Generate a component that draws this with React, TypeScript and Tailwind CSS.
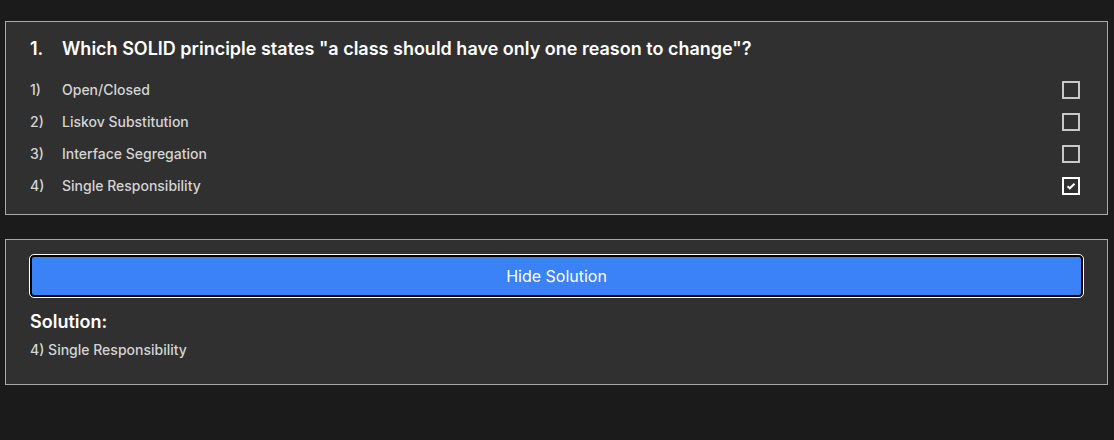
import { useState } from "react";

interface Option {
  id: number;
  label: string;
}

const options: Option[] = [
  { id: 1, label: "Open/Closed" },
  { id: 2, label: "Liskov Substitution" },
  { id: 3, label: "Interface Segregation" },
  { id: 4, label: "Single Responsibility" },
];

const Checkbox = ({ checked }: { checked: boolean }) => (
  <div
    className={`w-[18px] h-[18px] border-2 flex items-center justify-center ${
      checked ? "border-white" : "border-[#c8c8c8]"
    }`}
  >
    {checked && (
      <svg width="12" height="12" viewBox="0 0 12 12" fill="none">
        <path d="M2.5 6.2 L4.8 8.3 L9.5 3.8" stroke="white" strokeWidth="2" />
      </svg>
    )}
  </div>
);

const App = () => {
  const [selected] = useState(4);

  return (
    <div className="min-h-[440px] bg-[#1b1b1b] pt-[21px] pl-[5px] pr-[6px] font-['Inter',sans-serif]">
      <div className="bg-[#303030] border border-[#a9a9a9] pl-6 pr-[27px] pt-[15px] pb-3">
        <h2 className="flex text-lg font-semibold text-white leading-6">
          <span className="w-8">1.</span>
          <span>Which SOLID principle states "a class should have only one reason to change"?</span>
        </h2>
        <div className="mt-[13px]">
          {options.map((option) => (
            <div key={option.id} className="flex items-center h-8 text-sm font-medium text-[#d4d4d4]">
              <span className="w-8">{option.id})</span>
              <span className="flex-1">{option.label}</span>
              <Checkbox checked={option.id === selected} />
            </div>
          ))}
        </div>
      </div>

      <div className="mt-6 bg-[#303030] border border-[#a9a9a9] px-6 pt-[15px] pb-6">
        <button className="w-full h-[42px] bg-[#3b82f6] text-white text-base rounded border-2 border-black outline outline-1 outline-white">
          Hide Solution
        </button>
        <h3 className="mt-[13px] text-lg font-semibold text-white leading-6">Solution:</h3>
        <p className="mt-[6px] text-sm font-medium text-[#d4d4d4]">4) Single Responsibility</p>
      </div>
    </div>
  );
};

export default App;
